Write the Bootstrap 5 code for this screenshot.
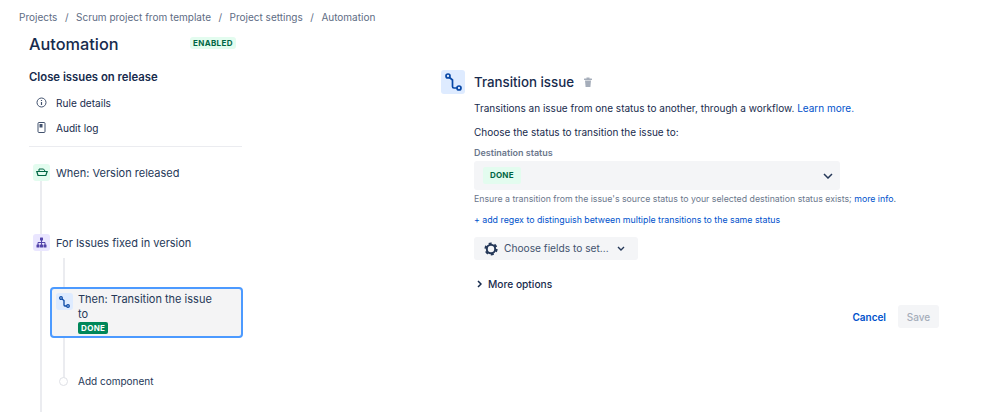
<!doctype html>
<html lang="en"><head><meta charset="utf-8"><title>Automation</title>
<link href="https://cdn.jsdelivr.net/npm/bootstrap@5.3.0/dist/css/bootstrap.min.css" rel="stylesheet">
<style>
html,body{height:412px;overflow:hidden;background:#fff}
body{font-family:Inter,"Liberation Sans",sans-serif;color:#172b4d;font-size:10px;line-height:16px}
a{color:#0052cc;text-decoration:none}
.crumbs{padding:9px 0 0 19px;height:26px;color:#5e6c84;font-size:10px;line-height:16px;gap:7.5px}
.shell{padding-left:29px}
.leftcol{width:213px;flex:none}
.title{font-size:16.3px;line-height:24px;font-weight:500;margin:0;padding-top:6px;width:161px}
.lozenge-on{font-size:8px;line-height:12px;font-weight:700;background:#e3fcef;color:#006644;border-radius:3px;padding:0 3px;letter-spacing:.35px;margin-top:11px;height:12px}
.rulename{font-size:11.3px;line-height:16px;font-weight:600;margin:13px 0 0}
.sidelink{height:25px;padding-left:7px;gap:9px;font-size:10.1px}
.sidelist{margin-top:5px;padding-bottom:6px;border-bottom:1px solid #ebecf0;height:57px}
.timeline{position:relative;height:265px}
.track1,.track2{position:absolute;width:2px;background:#ebecf0}
.track1{left:11px;top:32px;bottom:0}
.track2{left:34px;top:111px;height:124px}
.tile{width:17px;height:17px;border-radius:3px;flex:none;display:flex;align-items:center;justify-content:center;position:relative}
.tile-g{background:#e3fcef}.tile-p{background:#eae6ff}.tile-b{background:#deebff}
.step{position:absolute;left:4px;gap:6px;font-size:11px;line-height:16px;color:#253858}
.when{top:17px}.forx{top:87px}
.then{position:absolute;left:21px;top:140px;width:193px;height:51px;border:2px solid #4c9aff;border-radius:4px;background:#f4f4f5;padding:3px 20px 0 4px;gap:5px;font-size:11px;line-height:15px;color:#253858}
.then .tile{margin-top:1px}
.donebadge{font-size:8px;line-height:10px;font-weight:700;color:#fff;background:#00875a;border-radius:2px;padding:1px 3px;letter-spacing:.35px;display:inline-block;vertical-align:top}
.addc{position:absolute;left:30px;top:226px;gap:10px;font-size:10px;color:#253858}
.dot{width:9px;height:9px;border-radius:50%;border:1px solid #dfe1e6;background:#fff;position:relative;flex:none}
.panel{margin-left:199px;width:498px;padding-top:44px;flex:none}
.headrow{gap:9px}
.bigtile{width:24px;height:24px;border-radius:3px;background:#deebff;display:flex;align-items:center;justify-content:center;flex:none}
.ptitle{font-size:13.3px;line-height:20px;font-weight:500;margin:0}
.pbody{margin-left:33px}
.desc{margin:0;padding-top:6px;font-size:10px}
.descb{margin:0;padding-top:8px;font-size:10px}
.fieldlabel{font-size:9px;line-height:12px;font-weight:600;color:#6b778c;margin-top:7px}
.selectbox{width:366px;height:29px;margin-top:2px;background:#f4f5f7;border-radius:3px;padding:0 7px 0 9px}
.donelite{font-size:8px;line-height:13px;font-weight:700;background:#e3fcef;color:#006644;padding:2px 7px;border-radius:2px;letter-spacing:.2px}
.hint{font-size:8.77px;line-height:12px;color:#6b778c;margin-top:3px}
.regex{font-size:8.8px;line-height:12px;margin-top:9px}
.choose{width:164px;height:23px;margin-top:11px;background:#f4f5f7;border:0;border-radius:3px;color:#42526e;font-size:10.2px;padding:0 0 0 10px;gap:6px}
.choose .chev{margin-left:2px}
.more{margin-top:16px;font-size:10.2px;font-weight:500;gap:6px;padding-left:3px}
.actions{width:465px;margin-top:13px;gap:12px;justify-content:flex-end}
.btn-cancel{font-size:10px;font-weight:600;color:#0052cc;padding:0;border:0;background:none}
.btn-save{font-size:10px;font-weight:500;color:#a5adba;background:#f4f5f7;border:0;border-radius:3px;width:41px;height:23px;padding:0}
</style></head><body>
<nav class="crumbs d-flex"><span>Projects</span><span>/</span><span>Scrum project from template</span><span>/</span><span>Project settings</span><span>/</span><span>Automation</span></nav>
<div class="shell d-flex">
 <div class="leftcol">
  <div class="d-flex"><h1 class="title">Automation</h1><span class="lozenge-on">ENABLED</span></div>
  <h2 class="rulename">Close issues on release</h2>
  <div class="sidelist">
   <div class="sidelink d-flex align-items-center"><svg width="11" height="11" viewBox="0 0 11 11"><circle cx="5.5" cy="5.5" r="4.500" fill="none" stroke="#42526e"/><path d="M5.500 5v3M5.500 3v1" stroke="#42526e" stroke-width="1.200"/></svg><span>Rule details</span></div>
   <div class="sidelink d-flex align-items-center"><svg width="11" height="11" viewBox="0 0 11 11"><rect x="2" y="0.500" width="7" height="10" rx="1" fill="#fff" stroke="#42526e"/><rect x="3.500" y="2" width="3" height="3.500" fill="#42526e"/></svg><span>Audit log</span></div>
  </div>
  <div class="timeline">
   <div class="track1"></div><div class="track2"></div>
   <div class="step when d-flex align-items-center"><span class="tile tile-g"><svg width="12" height="9" viewBox="0 0 12 9"><path d="M3 3V1h4.500L9 3" fill="none" stroke="#006644"/><path d="M.8 3.500h10.400L9.800 7.500H2z" fill="none" stroke="#006644" stroke-width="1.200"/></svg></span><span>When: Version released</span></div>
   <div class="step forx d-flex align-items-center"><span class="tile tile-p"><svg width="11" height="11" viewBox="0 0 11 11" fill="#5243aa"><rect x="4" y="0.500" width="3" height="3" rx=".5"/><rect x="0.500" y="7.500" width="3" height="3" rx=".5"/><rect x="7.500" y="7.500" width="3" height="3" rx=".5"/><rect x="4" y="7.500" width="3" height="3" rx=".5"/><path d="M2 8V5.500h7V8M5.500 3v5" fill="none" stroke="#5243aa"/></svg></span><span>For Issues fixed in version</span></div>
   <div class="then d-flex"><span class="tile tile-b"><svg width="11" height="12" viewBox="0 0 11 12" fill="none" stroke="#0747a6" stroke-width="1.300"><circle cx="2" cy="2" r="1.300"/><circle cx="9" cy="10" r="1.300"/><path d="M3 3l2 1.500v4.500q0 1 1 1h1.700"/></svg></span><div>Then: Transition the issue to<br><span class="donebadge">DONE</span></div></div>
   <div class="addc d-flex align-items-center"><span class="dot"></span><span>Add component</span></div>
  </div>
 </div>
 <div class="panel">
  <div class="headrow d-flex align-items-center"><span class="bigtile"><svg width="17" height="18" viewBox="0 0 17 18" fill="none" stroke="#0747a6" stroke-width="1.700"><circle cx="3" cy="3" r="2"/><circle cx="14" cy="15" r="2"/><path d="M4.500 4.500l3 2.500v6.500q0 1.500 1.500 1.500h3"/></svg></span><h2 class="ptitle">Transition issue</h2><svg width="10" height="11" viewBox="0 0 10 11" fill="#a5adba"><rect x="1" y="1.500" width="8" height="1.500" rx=".5"/><rect x="3.500" y="0.500" width="3" height="1.500"/><path d="M2 3.500h6l-.6 6.500H2.600z"/></svg></div>
  <div class="pbody">
   <p class="desc">Transitions an issue from one status to another, through a workflow. <a href="#">Learn more.</a></p>
   <p class="descb">Choose the status to transition the issue to:</p>
   <div class="fieldlabel">Destination status</div>
   <div class="selectbox d-flex align-items-center justify-content-between"><span class="donelite">DONE</span><svg width="10" height="6" viewBox="0 0 10 6" fill="none" stroke="#253858" stroke-width="1.500"><path d="M1 1l4 4 4-4"/></svg></div>
   <div class="hint">Ensure a transition from the issue's source status to your selected destination status exists; <a href="#">more info</a>.</div>
   <div class="regex"><a href="#">+ add regex to distinguish between multiple transitions to the same status</a></div>
   <button class="choose btn d-flex align-items-center" type="button"><svg width="14" height="14" viewBox="0 0 14 14"><circle cx="7" cy="7" r="4.200" fill="none" stroke="#253858" stroke-width="2"/><circle cx="7" cy="7" r="5.600" fill="none" stroke="#253858" stroke-width="2" stroke-dasharray="2.900 2.960"/></svg><span>Choose fields to set...</span><svg class="chev" width="8" height="5" viewBox="0 0 8 5" fill="none" stroke="#253858" stroke-width="1.400"><path d="M1 1l3 3 3-3"/></svg></button>
   <div class="more d-flex align-items-center"><svg width="5" height="8" viewBox="0 0 5 8" fill="none" stroke="#172b4d" stroke-width="1.500"><path d="M1 1l3 3-3 3"/></svg><span>More options</span></div>
   <div class="actions d-flex align-items-center"><button class="btn-cancel" type="button">Cancel</button><button class="btn-save" type="button">Save</button></div>
  </div>
 </div>
</div>
</body></html>
